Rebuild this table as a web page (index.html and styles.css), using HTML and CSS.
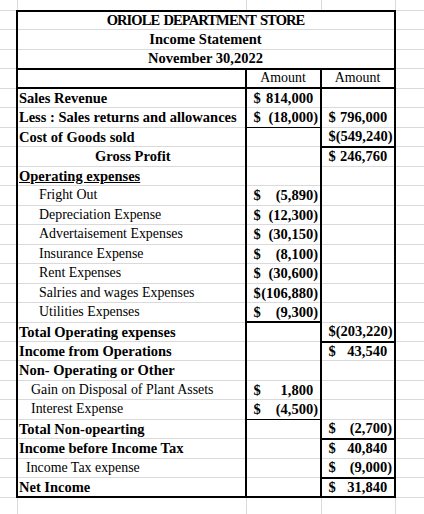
FILE: index.html
```html
<!DOCTYPE html>
<html lang="en">
<head>
  <meta charset="UTF-8" />
  <title>Oriole Department Store - Income Statement</title>
  <link rel="stylesheet" href="styles.css">
</head>
<body>
  <div class="sheet-wrap">
    <table class="sheet">
      <colgroup>
        <col class="col-a"><col class="col-b"><col class="col-c"><col class="col-d"><col class="col-e">
      </colgroup>
      <tr class="top"><td></td><td></td><td></td><td></td><td></td></tr>

      <tr><td></td><td colspan="3" class="title bl br bt"><span class="store">ORIOLE DEPARTMENT STORE</span></td><td></td></tr>
      <tr><td></td><td colspan="3" class="title bl br">Income Statement</td><td></td></tr>
      <tr><td></td><td colspan="3" class="title bl br bb">November 30,2022</td><td></td></tr>
      <tr><td></td><td class="bl br bb"></td><td class="br bb head">Amount</td><td class="br bb head">Amount</td><td></td></tr>

      <tr><td></td><td class="bl br">Sales Revenue</td>
        <td class="br"><div class="acct"><span>$</span><span class="pos">814,000</span></div></td>
        <td class="br"></td><td></td></tr>
      <tr><td></td><td class="bl br">Less : Sales returns and allowances</td>
        <td class="br bbt"><div class="acct"><span>$</span><span>(18,000)</span></div></td>
        <td class="br"><div class="acct"><span>$</span><span class="pos">796,000</span></div></td><td></td></tr>
      <tr><td></td><td class="bl br">Cost of Goods sold</td><td class="br"></td>
        <td class="br bb"><div class="acct"><span>$</span><span>(549,240)</span></div></td><td></td></tr>
      <tr><td></td><td class="bl br gp">Gross Profit</td><td class="br"></td>
        <td class="br"><div class="acct"><span>$</span><span class="pos">246,760</span></div></td><td></td></tr>
      <tr><td></td><td class="bl br"><u>Operating expenses</u></td><td class="br"></td><td class="br"></td><td></td></tr>

      <tr><td></td><td class="bl br sub in1">Fright Out</td>
        <td class="br"><div class="acct"><span>$</span><span>(5,890)</span></div></td><td class="br"></td><td></td></tr>
      <tr><td></td><td class="bl br sub in1">Depreciation Expense</td>
        <td class="br"><div class="acct"><span>$</span><span>(12,300)</span></div></td><td class="br"></td><td></td></tr>
      <tr><td></td><td class="bl br sub in1">Advertaisement Expenses</td>
        <td class="br"><div class="acct"><span>$</span><span>(30,150)</span></div></td><td class="br"></td><td></td></tr>
      <tr><td></td><td class="bl br sub in1">Insurance Expense</td>
        <td class="br"><div class="acct"><span>$</span><span>(8,100)</span></div></td><td class="br"></td><td></td></tr>
      <tr><td></td><td class="bl br sub in1">Rent Expenses</td>
        <td class="br"><div class="acct"><span>$</span><span>(30,600)</span></div></td><td class="br"></td><td></td></tr>
      <tr><td></td><td class="bl br sub in1">Salries and wages Expenses</td>
        <td class="br"><div class="acct"><span>$</span><span>(106,880)</span></div></td><td class="br"></td><td></td></tr>
      <tr><td></td><td class="bl br sub in1">Utilities Expenses</td>
        <td class="br bb"><div class="acct"><span>$</span><span>(9,300)</span></div></td><td class="br"></td><td></td></tr>

      <tr><td></td><td class="bl br">Total Operating expenses</td><td class="br"></td>
        <td class="br bb"><div class="acct"><span>$</span><span>(203,220)</span></div></td><td></td></tr>
      <tr><td></td><td class="bl br">Income from Operations</td><td class="br"></td>
        <td class="br"><div class="acct"><span>$</span><span class="pos">43,540</span></div></td><td></td></tr>
      <tr><td></td><td class="bl br">Non- Operating or Other</td><td class="br"></td><td class="br"></td><td></td></tr>
      <tr><td></td><td class="bl br sub in2">Gain on Disposal of Plant Assets</td>
        <td class="br"><div class="acct"><span>$</span><span class="pos">1,800</span></div></td><td class="br"></td><td></td></tr>
      <tr><td></td><td class="bl br sub in2">Interest Expense</td>
        <td class="br bbt"><div class="acct"><span>$</span><span>(4,500)</span></div></td><td class="br"></td><td></td></tr>
      <tr><td></td><td class="bl br">Total Non-opearting</td><td class="br"></td>
        <td class="br bb"><div class="acct"><span>$</span><span>(2,700)</span></div></td><td></td></tr>
      <tr><td></td><td class="bl br">Income before Income Tax</td><td class="br"></td>
        <td class="br"><div class="acct"><span>$</span><span class="pos">40,840</span></div></td><td></td></tr>
      <tr><td></td><td class="bl br sub in3">Income Tax expense</td><td class="br"></td>
        <td class="br bb"><div class="acct"><span>$</span><span>(9,000)</span></div></td><td></td></tr>
      <tr><td></td><td class="bl br bb">Net Income</td><td class="br bb"></td>
        <td class="br bb"><div class="acct"><span>$</span><span class="pos">31,840</span></div></td><td></td></tr>

      <tr class="rest"><td></td><td></td><td></td><td></td><td></td></tr>
    </table>
  </div>
</body>
</html>
```

FILE: styles.css
```css
* {
  margin: 0; padding: 0; box-sizing: border-box;
}
body {
  font-family: "Liberation Serif", "Times New Roman", serif;
  font-size: 14.5px;
  color: #000;
  background-color: #fff;
}
.sheet-wrap {
  width: 424px;
  height: 514px;
  overflow: hidden;
}
.sheet {
  border-collapse: collapse;
  table-layout: fixed;
  width: 455px;
}
.col-a { width: 17px; }
.col-b { width: 229px; }
.col-c { width: 75px; }
.col-d { width: 74px; }
.col-e { width: 60px; }

.sheet tr {
  height: 19.47px;
}
.sheet tr.top {
  height: 10.5px;
}
.sheet tr.rest {
  height: 30px;
}
.sheet td {
  border: 1px solid #dadada;
  padding: 0 2px 1.5px 1px;
  line-height: 16px;
  vertical-align: bottom;
  white-space: nowrap;
  font-weight: bold;
}
.sheet tr.top td {
  border-top: none;
  padding: 0;
}
.sheet tr td:first-child {
  border-left: none;
}

/* excel style borders */
.sheet td.bl { border-left: 2px solid #000; }
.sheet td.br { border-right: 2px solid #000; }
.sheet td.bt { border-top: 2px solid #000; }
.sheet td.bb { border-bottom: 2px solid #000; }
.sheet td.bbt { border-bottom: 1px solid #000; }

.title {
  text-align: center;
}
.store {
  letter-spacing: -0.9px;
  word-spacing: 1.5px;
}
.head {
  text-align: center;
  font-size: 13.9px;
}
.sheet td.head {
  font-weight: normal;
}
.sheet td.sub {
  font-weight: normal;
  font-size: 13.9px;
}
.sheet td.in1 { padding-left: 21px; }
.sheet td.in2 { padding-left: 13px; }
.sheet td.in3 { padding-left: 8px; }
.sheet td.gp { padding-left: 77px; }

.acct {
  display: flex;
  justify-content: space-between;
  padding-left: 5.5px;
}
.acct .pos {
  padding-right: 0.333em;
}
```
